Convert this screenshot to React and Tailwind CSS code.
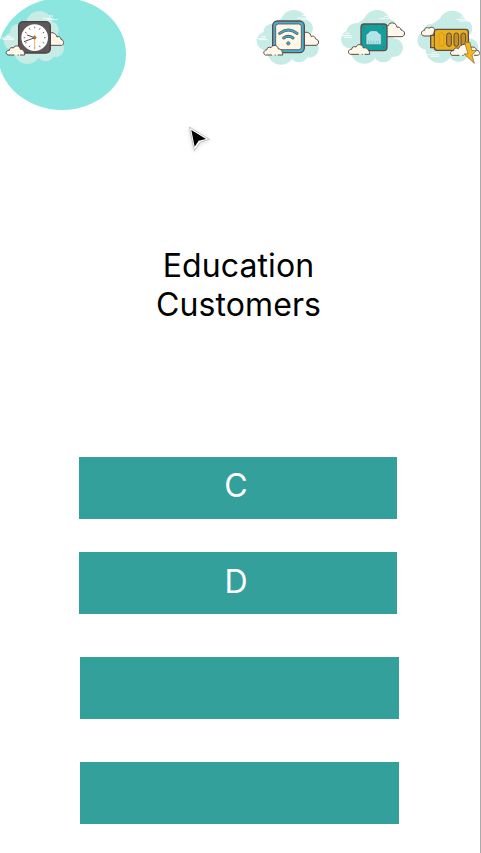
const OUTLINE = '#5d4a4a';

function ClockIcon() {
  const ticks = [0, 30, 60, 90, 120, 150, 180, 210, 240, 270, 300, 330];
  return (
    <svg viewBox="0 0 210 195" className="h-[65px] w-[70px] shrink-0" aria-label="Clock">
      <g fill="#c6ece5">
        <circle cx="118" cy="58" r="40" />
        <circle cx="150" cy="75" r="26" />
        <circle cx="56" cy="82" r="26" />
        <circle cx="38" cy="108" r="27" />
        <circle cx="82" cy="137" r="40" />
        <circle cx="137" cy="141" r="28" />
        <circle cx="166" cy="130" r="26" />
        <path d="M40 80h125v65H40z" />
      </g>
      <path d="M129 40h31M146 33h13M141 44h31M4 99h38M20 94h13M8 103h35" stroke="#fff" strokeWidth="3" opacity=".85" />
      <path d="M146 121h39c8-2 8-15-2-18 0-7-7-10-12-7-3-13-19-17-25-8z" fill="#fff8e8" stroke={OUTLINE} strokeWidth="3" strokeLinejoin="round" />
      <rect x="56" y="50" width="95" height="94" rx="13" fill="#5d575a" stroke="#4d4143" strokeWidth="4" />
      <circle cx="104" cy="98" r="40" fill="#fff" />
      <g stroke="#62595c" strokeWidth="2.5">
        {ticks.map((a) => (
          <path key={a} d="M104 65v5" transform={`rotate(${a} 104 98)`} />
        ))}
      </g>
      <path d="M104 98L81 90M104 98l-32 12" stroke="#51484b" strokeWidth="3" />
      <path d="M104 90v44" stroke="#eab45f" strokeWidth="3" />
      <circle cx="104" cy="98" r="4" fill="#d9822b" stroke="#6b4a32" strokeWidth="2" />
      <path d="M24 150c-9-3-6-15 4-14 0-7 7-10 12-7 5-10 20-8 21 4 8-1 13 6 13 17z" fill="#fff8e8" />
      <path d="M43 150H24c-9-3-6-15 4-14 0-7 7-10 12-7 5-10 20-8 21 4 8-1 13 6 13 17H60M53 150h3" fill="none" stroke={OUTLINE} strokeWidth="3" strokeLinejoin="round" />
    </svg>
  );
}

function WifiIcon() {
  return (
    <svg viewBox="0 0 225 195" className="h-[65px] w-[75px] shrink-0" aria-label="Wi-Fi">
      <g fill="#c6ece5">
        <circle cx="132" cy="56" r="41" />
        <circle cx="164" cy="70" r="25" />
        <circle cx="66" cy="82" r="26" />
        <circle cx="48" cy="108" r="28" />
        <circle cx="93" cy="138" r="41" />
        <circle cx="147" cy="143" r="29" />
        <circle cx="178" cy="130" r="28" />
        <path d="M50 75h130v70H50z" />
        <path d="M66 57q16-3 28-17l14 20-16 20z" />
      </g>
      <path d="M141 39h31M156 31h13M153 43h27M20 100h27M34 95h13M26 104h27" stroke="#fff" strokeWidth="3" opacity=".85" />
      <path d="M160 121h38c11-3 10-17-1-19-1-7-7-11-13-7-3-14-20-18-27-7z" fill="#fff8e8" stroke={OUTLINE} strokeWidth="3" strokeLinejoin="round" />
      <rect x="68" y="48" width="95" height="95" rx="14" fill="#45afd0" stroke={OUTLINE} strokeWidth="4" />
      <rect x="77" y="57" width="77" height="77" rx="8" fill="#fff8e8" stroke={OUTLINE} strokeWidth="2.5" />
      <g fill="none" strokeLinecap="round">
        <g stroke={OUTLINE} strokeWidth="9">
          <path d="M89 85q26-20 52 0M101 99q14-10 28 0" />
        </g>
        <g stroke="#38abcf" strokeWidth="5.5">
          <path d="M89 85q26-20 52 0M101 99q14-10 28 0" />
        </g>
      </g>
      <circle cx="115" cy="115" r="5" fill="#38abcf" stroke={OUTLINE} strokeWidth="2" />
      <path d="M46 150c-8-4-5-15 4-15 0-7 7-10 13-7 5-11 21-8 22 4 8-1 13 6 13 18z" fill="#fff8e8" />
      <path d="M66 150H46c-8-4-5-15 4-15 0-7 7-10 13-7 5-11 21-8 22 4 8-1 13 6 13 18H83M74 150h3" fill="none" stroke={OUTLINE} strokeWidth="3" strokeLinejoin="round" />
    </svg>
  );
}

function EthernetIcon() {
  return (
    <svg viewBox="0 0 225 195" className="h-[65px] w-[75px] shrink-0" aria-label="Ethernet">
      <g fill="#c6ece5">
        <circle cx="126" cy="56" r="41" />
        <circle cx="161" cy="68" r="25" />
        <circle cx="61" cy="81" r="26" />
        <circle cx="45" cy="103" r="27" />
        <circle cx="88" cy="135" r="41" />
        <circle cx="145" cy="142" r="30" />
        <circle cx="176" cy="128" r="28" />
        <path d="M50 72h125v73H50z" />
        <path d="M61 56q16-3 27-17l14 21-14 20z" />
      </g>
      <path d="M133 40h29M148 34h13M19 92h30M31 85h13M27 97h25" stroke="#fff" strokeWidth="3" opacity=".85" />
      <path d="M155 95h46c12-4 9-19-3-20 0-7-6-10-12-8-2-16-23-18-27-4-11-4-20 9-11 17z" fill="#fff8e8" stroke={OUTLINE} strokeWidth="3" strokeLinejoin="round" />
      <rect x="78" y="57" width="78" height="80" rx="10" fill="#11a19c" stroke={OUTLINE} strokeWidth="4" />
      <path d="M93 119V89l9-7 5-5h17l5 5 10 7v30z" fill="#b0e6e8" stroke="#39757a" strokeWidth="2" strokeLinejoin="round" />
      <path d="M101 118v-11M108 118v-11M116 118v-11M124 118v-11M131 118v-11" stroke="#7db9bb" strokeWidth="2" />
      <g fill="#477879">
        <circle cx="88" cy="68" r="3.5" />
        <circle cx="146" cy="68" r="3.5" />
        <circle cx="146" cy="126" r="3.5" />
      </g>
      <path d="M46 148c-9-3-7-16 4-15 0-7 7-10 13-7 4-11 20-9 22 3 9-3 19 5 19 19z" fill="#fff8e8" />
      <path d="M72 148H46c-9-3-7-16 4-15 0-7 7-10 13-7 4-11 20-9 22 3 9-3 19 5 19 19H89M80 148h3" fill="none" stroke={OUTLINE} strokeWidth="3" strokeLinejoin="round" />
    </svg>
  );
}

function BatteryIcon() {
  return (
    <svg viewBox="0 0 210 195" className="h-[65px] w-[70px] shrink-0" aria-label="Battery charging">
      <g fill="#c6ece5">
        <circle cx="124" cy="58" r="41" />
        <circle cx="158" cy="70" r="26" />
        <circle cx="60" cy="82" r="25" />
        <circle cx="46" cy="107" r="27" />
        <circle cx="85" cy="133" r="41" />
        <circle cx="143" cy="142" r="29" />
        <circle cx="174" cy="128" r="28" />
        <path d="M50 72h124v73H50z" />
        <path d="M60 57q16-3 26-17l14 20-14 20z" />
      </g>
      <path d="M137 43h34M149 36h13M144 48h31M50 149h35M62 143h15M58 154h26" stroke="#fff" strokeWidth="3" opacity=".85" />
      <path d="M63 93H39c-12-3-9-17 2-17 0-8 8-10 13-6 8-8 21 0 18 10z" fill="#fff8e8" stroke={OUTLINE} strokeWidth="3" strokeLinejoin="round" />
      <path d="M78 73h86q8 0 8 8v47q0 8-8 8H78q-7 0-8-8H59V91h11V81q0-8 8-8z" fill="#e9b01c" stroke={OUTLINE} strokeWidth="4" strokeLinejoin="round" />
      <path d="M70 83v45" stroke={OUTLINE} strokeWidth="3" />
      <rect x="84" y="84" width="15" height="40" rx="7" fill="none" stroke="#d19824" strokeWidth="2.500" />
      <g fill="#c48f24" stroke={OUTLINE} strokeWidth="3">
        <rect x="107" y="84" width="14" height="40" rx="7" />
        <rect x="129" y="84" width="14" height="40" rx="7" />
        <rect x="150" y="84" width="14" height="40" rx="7" />
      </g>
      <path d="M123 151c-8-4-5-15 5-14 0-8 8-10 14-6 6-16 29-18 38-4 9-3 16 2 16 9 12 0 14 14 3 15z" fill="#fff8e8" />
      <path d="M145 151h-22c-8-4-5-15 5-14 0-8 8-10 14-6 6-16 29-18 38-4 9-3 16 2 16 9 12 0 14 14 3 15h-10M154 151h4" fill="none" stroke={OUTLINE} strokeWidth="3" strokeLinejoin="round" />
      <path d="M161 112h16l5 24 14 1-13 14 7 24-31-28 12-1z" fill="#f5b51e" stroke="#79603c" strokeWidth="2" strokeLinejoin="round" />
      <path d="M208.500 0v195" stroke="#aaa" strokeWidth="3" />
    </svg>
  );
}

function Cursor() {
  return (
    <svg viewBox="0 0 120 120" className="absolute top-[120px] left-[180px] size-10 drop-shadow-sm" aria-hidden="true">
      <path d="M28 21L88 58 61 66 43 92z" fill="#fff" stroke="#aaa" strokeWidth="2" strokeLinejoin="round" />
      <path d="M34 30L78 57 56 62 44 80z" fill="#000" />
    </svg>
  );
}

function Option({ children, className = '' }) {
  return (
    <button className={`flex h-[62px] w-[318.500px] shrink-0 justify-center bg-[#33a09b] pt-[9px] pr-[4px] text-[32px] leading-[39px] font-normal text-white ${className}`}>
      {children}
    </button>
  );
}

export default function App() {
  return (
    <main className="relative h-[853px] w-[481px] overflow-hidden border-r border-[#aaa] bg-white font-['Inter',sans-serif]">
      <div className="absolute -top-[2px] -left-[2px] h-[112px] w-[128px] rounded-[50%] bg-[#8ae6df]" />
      <header className="relative flex w-[481px] pt-[5px]">
        <ClockIcon />
        <div className="ml-[180px] flex gap-[10px]">
          <WifiIcon />
          <EthernetIcon />
        </div>
        <div className="ml-px">
          <BatteryIcon />
        </div>
      </header>
      <Cursor />
      <h1 className="mt-[176px] w-[477px] text-center text-[32px] leading-[39px] font-normal tracking-[0.1px] text-black">
        Education
        <br />
        Customers
      </h1>
      <div className="mt-[133px] flex flex-col pl-[78.800px]">
        <Option>C</Option>
        <Option className="mt-[33px] pt-[10px]">D</Option>
        <Option className="mt-[43px] ml-[1.300px]" />
        <Option className="mt-[43px] ml-[1.300px]" />
      </div>
    </main>
  );
}
